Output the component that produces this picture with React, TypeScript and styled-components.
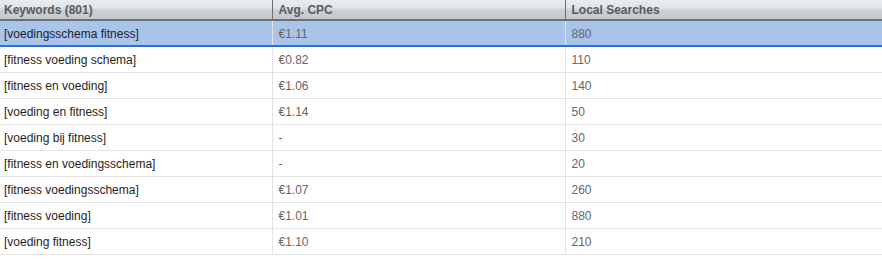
import React from 'react';
import styled, { createGlobalStyle } from 'styled-components';

const GlobalStyle = createGlobalStyle`
  html, body {
    margin: 0;
    padding: 0;
    background: #ffffff;
  }
`;

interface KeywordRow {
  keyword: string;
  cpc: string;
  searches: string;
}

const ROWS: KeywordRow[] = [
  { keyword: '[voedingsschema fitness]', cpc: '€1.11', searches: '880' },
  { keyword: '[fitness voeding schema]', cpc: '€0.82', searches: '110' },
  { keyword: '[fitness en voeding]', cpc: '€1.06', searches: '140' },
  { keyword: '[voeding en fitness]', cpc: '€1.14', searches: '50' },
  { keyword: '[voeding bij fitness]', cpc: '-', searches: '30' },
  { keyword: '[fitness en voedingsschema]', cpc: '-', searches: '20' },
  { keyword: '[fitness voedingsschema]', cpc: '€1.07', searches: '260' },
  { keyword: '[fitness voeding]', cpc: '€1.01', searches: '880' },
  { keyword: '[voeding fitness]', cpc: '€1.10', searches: '210' }
];

const Grid = styled.div`
  width: 882px;
  height: 260px;
  overflow: hidden;
  font-family: 'Liberation Sans', Arial, sans-serif;
  font-size: 12px;
`;

const Table = styled.table`
  width: 100%;
  border-collapse: collapse;
  table-layout: fixed;
`;

const HeadCell = styled.th`
  height: 19px;
  padding: 0 0 0 6px;
  text-align: left;
  font-weight: bold;
  color: #5a5a5a;
  background: linear-gradient(#e6ecef 0%, #dfe5e9 40%, #c9d0d4 55%, #c3cacf 100%);
  border-bottom: 2px solid #6e6e6e;
  border-left: 1px solid #6e6e6e;

  &:first-child {
    border-left: none;
    padding-left: 4px;
  }
`;

// the selected row trades one pixel of height for its thicker blue rule
const Row = styled.tr<{ $selected?: boolean }>`
  background: ${({ $selected }) => ($selected ? '#a9c5eb' : '#ffffff')};

  td {
    height: ${({ $selected }) => ($selected ? '23px' : '25px')};
    padding-top: ${({ $selected }) => ($selected ? '1px' : '0')};
    border-bottom: ${({ $selected }) => ($selected ? '2px solid #2e6fd6' : '1px solid #e3e3e3')};
  }
`;

const Cell = styled.td<{ $muted?: boolean }>`
  padding: 0 0 0 6px;
  color: ${({ $muted }) => ($muted ? '#666666' : '#1e1e1e')};
  border-left: 1px solid #e3e3e3;
  white-space: nowrap;

  &:first-child {
    border-left: none;
    padding-left: 4px;
  }
`;

const App: React.FC = () => (
  <Grid>
    <GlobalStyle />
    <Table>
      <colgroup>
        <col style={{ width: 272 }} />
        <col style={{ width: 293 }} />
        <col />
      </colgroup>
      <thead>
        <tr>
          <HeadCell>Keywords (801)</HeadCell>
          <HeadCell>Avg. CPC</HeadCell>
          <HeadCell>Local Searches</HeadCell>
        </tr>
      </thead>
      <tbody>
        {ROWS.map((row, i) => (
          <Row key={row.keyword} $selected={i === 0}>
            <Cell>{row.keyword}</Cell>
            <Cell $muted>{row.cpc}</Cell>
            <Cell $muted>{row.searches}</Cell>
          </Row>
        ))}
      </tbody>
    </Table>
  </Grid>
);

export default App;
